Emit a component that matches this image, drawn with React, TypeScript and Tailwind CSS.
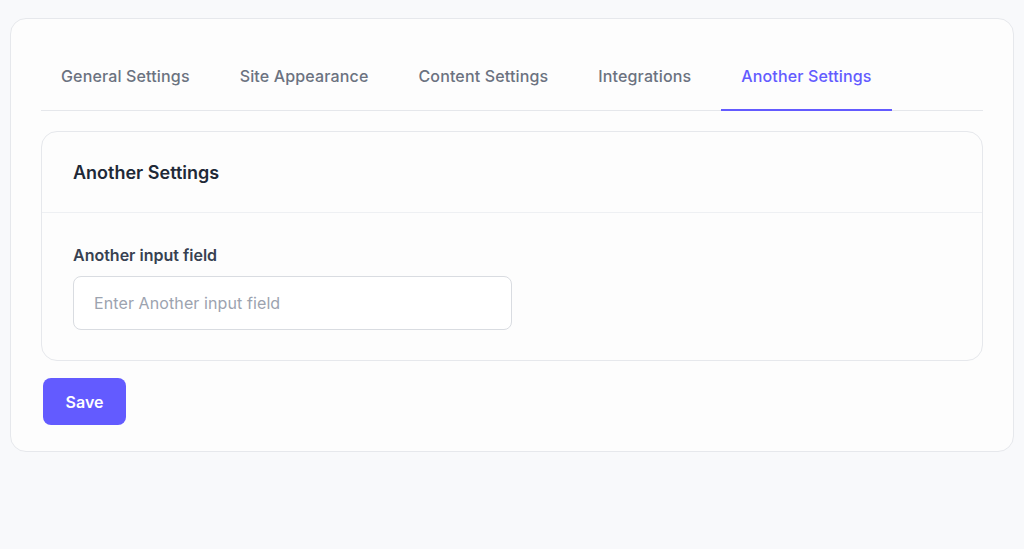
import React, { useState } from 'react';

const tabs = ['General Settings', 'Site Appearance', 'Content Settings', 'Integrations', 'Another Settings'];

const App = () => {
  const [active, setActive] = useState('Another Settings');
  const [value, setValue] = useState('');

  return (
    <div className="min-h-screen bg-[#f8f9fb] px-[10px] pt-[18px] font-['Inter',sans-serif]">
      <div className="rounded-[16px] border border-[#e6e8ec] bg-[#fdfdfd] px-[30px] pt-[30px] pb-[26px]">
        {/* Tabs */}
        <div className="flex gap-[10px] border-b border-[#e5e7eb]">
          {tabs.map((tab) => (
            <button
              key={tab}
              onClick={() => setActive(tab)}
              className={`-mb-px border-b-2 px-5 pt-[16px] pb-[22px] text-[16px] leading-[22px] font-medium tracking-[0.15px] ${
                active === tab ? 'border-[#635bff] text-[#635bff]' : 'border-transparent text-[#6b7280]'
              }`}
            >
              {tab}
            </button>
          ))}
        </div>

        {/* Panel */}
        <div className="mt-[20px] rounded-[16px] border border-[#e6e8ec] bg-[#fdfdfd]">
          <div className="border-b border-[#eef0f3] px-[31px] pt-[27px] pb-[25px]">
            <h2 className="text-[18px] leading-[28px] font-semibold text-[#1f2937]">{active}</h2>
          </div>
          <div className="px-[31px] pt-[30px] pb-[30px]">
            <label className="block text-[16px] leading-[24px] font-semibold text-[#374151]">Another input field</label>
            <input
              value={value}
              onChange={(e) => setValue(e.target.value)}
              placeholder="Enter Another input field"
              className="mt-[9px] h-[54px] w-[439px] rounded-[8px] border border-[#d9dce1] bg-white px-5 text-[16px] tracking-[0.1px] text-[#374151] outline-none placeholder:text-[#9ca3af]"
            />
          </div>
        </div>

        <button className="mt-[17px] ml-[2px] h-[47px] w-[83px] rounded-[8px] bg-[#635bff] text-[16px] font-semibold text-white">
          Save
        </button>
      </div>
    </div>
  );
};

export default App;
